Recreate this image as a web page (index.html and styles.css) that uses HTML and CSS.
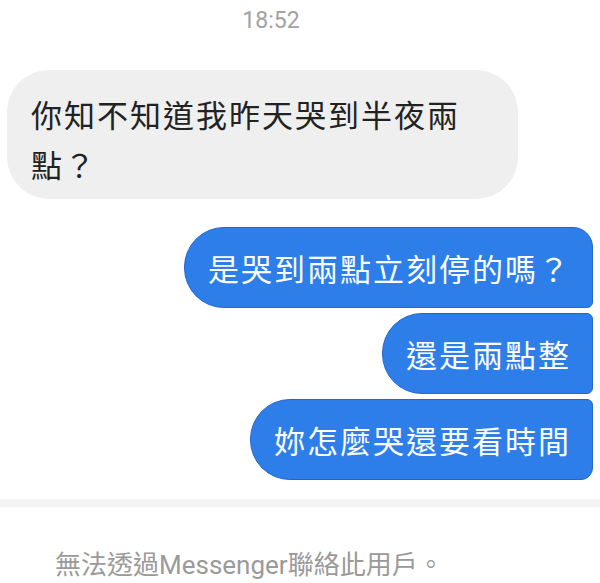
FILE: index.html
```html
<!DOCTYPE html>
<html lang="zh-Hant">
<head>
  <meta charset="UTF-8">
  <title>Messenger</title>
  <link rel="stylesheet" href="styles.css">
</head>
<body>

  <div class="chat">
    <div class="time">18:52</div>

    <div class="bubble received">你知不知道我昨天哭到半夜兩點？</div>

    <div class="sent-group">
      <div class="bubble sent first">是哭到兩點立刻停的嗎？</div>
      <div class="bubble sent">還是兩點整</div>
      <div class="bubble sent last">妳怎麼哭還要看時間</div>
    </div>
  </div>

  <div class="footer">
    <p>無法透過Messenger聯絡此用戶。</p>
  </div>

</body>
</html>
```

FILE: styles.css
```css
body {
  margin: 0;
  background: #fff;
  font-family: 'Noto Sans CJK TC', sans-serif;
  color: #222;
}

.chat {
  padding: 7px 7px 19px;
}

.time {
  font-family: 'Roboto', 'Noto Sans CJK TC', sans-serif;
  font-size: 23px;
  line-height: 27px;
  color: #a2a2a2;
  text-align: center;
  padding-right: 58px;
}

.bubble {
  font-size: 31px;
  letter-spacing: 2px;
  line-height: 50px;
}

.received {
  width: 440px;
  margin-top: 36px;
  padding: 19px 47px 10px 24px;
  background: #efefef;
  border-radius: 42px;
}

.sent-group {
  display: flex;
  flex-direction: column;
  align-items: flex-end;
  gap: 5px;
  margin-top: 28px;
}

.sent {
  padding: 15px 21px 14px 23px;
  background: #2e7ee9;
  color: #fbfdff;
  border: 1px solid #2466cc;
  border-radius: 40px 6px 6px 40px;
}

.sent.first {
  border-top-right-radius: 20px;
}

.sent.last {
  border-bottom-right-radius: 12px;
}

.footer {
  border-top: 8px solid #f3f3f3;
}

.footer p {
  margin: 0;
  padding: 40px 0 0 55px;
  font-family: 'Roboto', 'Noto Sans CJK TC', sans-serif;
  font-size: 26px;
  line-height: 36px;
  color: #9a9a9a;
}
```
